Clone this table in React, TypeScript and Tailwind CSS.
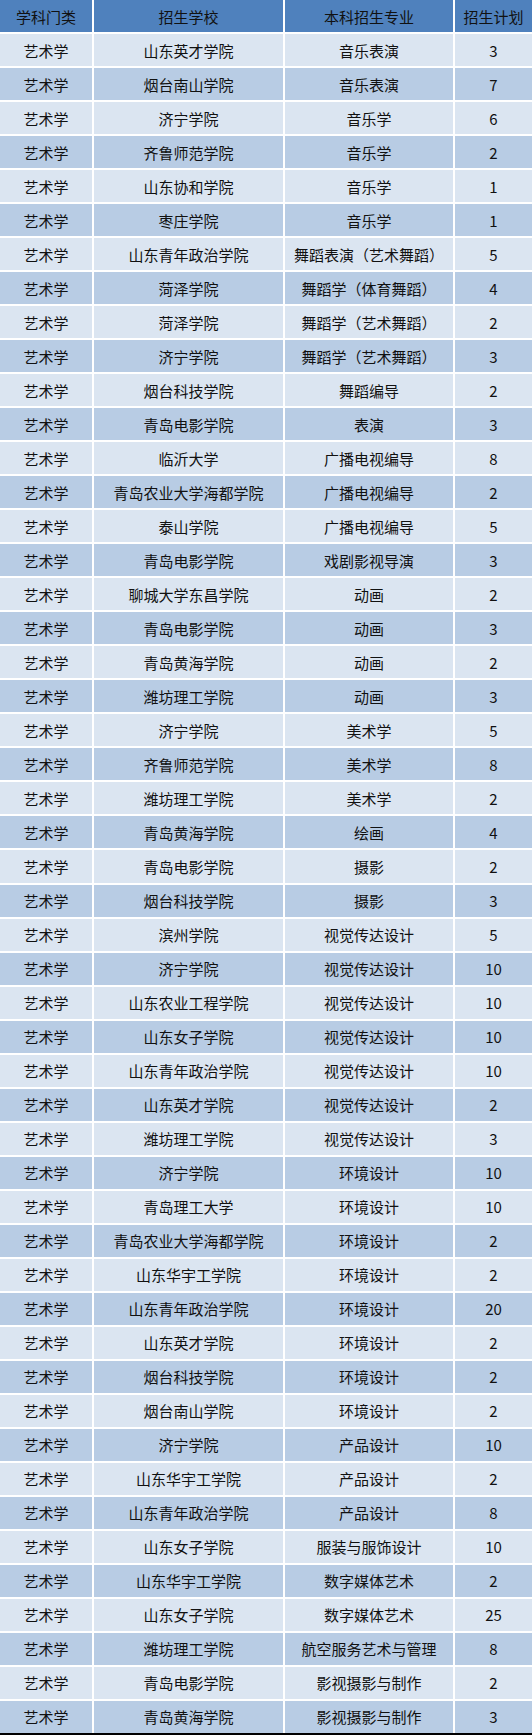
import React from "react";

const rows: [string, string, string, number][] = [
  ["艺术学", "山东英才学院", "音乐表演", 3],
  ["艺术学", "烟台南山学院", "音乐表演", 7],
  ["艺术学", "济宁学院", "音乐学", 6],
  ["艺术学", "齐鲁师范学院", "音乐学", 2],
  ["艺术学", "山东协和学院", "音乐学", 1],
  ["艺术学", "枣庄学院", "音乐学", 1],
  ["艺术学", "山东青年政治学院", "舞蹈表演（艺术舞蹈）", 5],
  ["艺术学", "菏泽学院", "舞蹈学（体育舞蹈）", 4],
  ["艺术学", "菏泽学院", "舞蹈学（艺术舞蹈）", 2],
  ["艺术学", "济宁学院", "舞蹈学（艺术舞蹈）", 3],
  ["艺术学", "烟台科技学院", "舞蹈编导", 2],
  ["艺术学", "青岛电影学院", "表演", 3],
  ["艺术学", "临沂大学", "广播电视编导", 8],
  ["艺术学", "青岛农业大学海都学院", "广播电视编导", 2],
  ["艺术学", "泰山学院", "广播电视编导", 5],
  ["艺术学", "青岛电影学院", "戏剧影视导演", 3],
  ["艺术学", "聊城大学东昌学院", "动画", 2],
  ["艺术学", "青岛电影学院", "动画", 3],
  ["艺术学", "青岛黄海学院", "动画", 2],
  ["艺术学", "潍坊理工学院", "动画", 3],
  ["艺术学", "济宁学院", "美术学", 5],
  ["艺术学", "齐鲁师范学院", "美术学", 8],
  ["艺术学", "潍坊理工学院", "美术学", 2],
  ["艺术学", "青岛黄海学院", "绘画", 4],
  ["艺术学", "青岛电影学院", "摄影", 2],
  ["艺术学", "烟台科技学院", "摄影", 3],
  ["艺术学", "滨州学院", "视觉传达设计", 5],
  ["艺术学", "济宁学院", "视觉传达设计", 10],
  ["艺术学", "山东农业工程学院", "视觉传达设计", 10],
  ["艺术学", "山东女子学院", "视觉传达设计", 10],
  ["艺术学", "山东青年政治学院", "视觉传达设计", 10],
  ["艺术学", "山东英才学院", "视觉传达设计", 2],
  ["艺术学", "潍坊理工学院", "视觉传达设计", 3],
  ["艺术学", "济宁学院", "环境设计", 10],
  ["艺术学", "青岛理工大学", "环境设计", 10],
  ["艺术学", "青岛农业大学海都学院", "环境设计", 2],
  ["艺术学", "山东华宇工学院", "环境设计", 2],
  ["艺术学", "山东青年政治学院", "环境设计", 20],
  ["艺术学", "山东英才学院", "环境设计", 2],
  ["艺术学", "烟台科技学院", "环境设计", 2],
  ["艺术学", "烟台南山学院", "环境设计", 2],
  ["艺术学", "济宁学院", "产品设计", 10],
  ["艺术学", "山东华宇工学院", "产品设计", 2],
  ["艺术学", "山东青年政治学院", "产品设计", 8],
  ["艺术学", "山东女子学院", "服装与服饰设计", 10],
  ["艺术学", "山东华宇工学院", "数字媒体艺术", 2],
  ["艺术学", "山东女子学院", "数字媒体艺术", 25],
  ["艺术学", "潍坊理工学院", "航空服务艺术与管理", 8],
  ["艺术学", "青岛电影学院", "影视摄影与制作", 2],
  ["艺术学", "青岛黄海学院", "影视摄影与制作", 3],
];

const headers = ["学科门类", "招生学校", "本科招生专业", "招生计划"];

export default function App() {
  return (
    <div
      className="w-[532px] bg-white border-b-2 border-black text-[15px] text-[#111]"
      style={{ fontFamily: '"Noto Sans CJK SC", "Noto Sans", sans-serif' }}
    >
      <div className="grid h-[1733px] grid-cols-[92px_189px_168px_77px] auto-rows-fr gap-[2px]">
        {headers.map((h) => (
          <div key={h} className="flex items-center justify-center bg-[#4f81bd] leading-none">
            {h}
          </div>
        ))}
        {rows.map((r, i) => {
          const bg = i % 2 === 0 ? "bg-[#dbe5f1]" : "bg-[#b8cce4]";
          return (
            <React.Fragment key={i}>
              <div className={`flex items-center justify-center leading-none ${bg}`}>{r[0]}</div>
              <div className={`flex items-center justify-center leading-none ${bg}`}>{r[1]}</div>
              <div className={`flex items-center justify-center leading-none ${bg}`}>{r[2]}</div>
              <div className={`flex items-center justify-center leading-none ${bg}`}>{r[3]}</div>
            </React.Fragment>
          );
        })}
      </div>
    </div>
  );
}
